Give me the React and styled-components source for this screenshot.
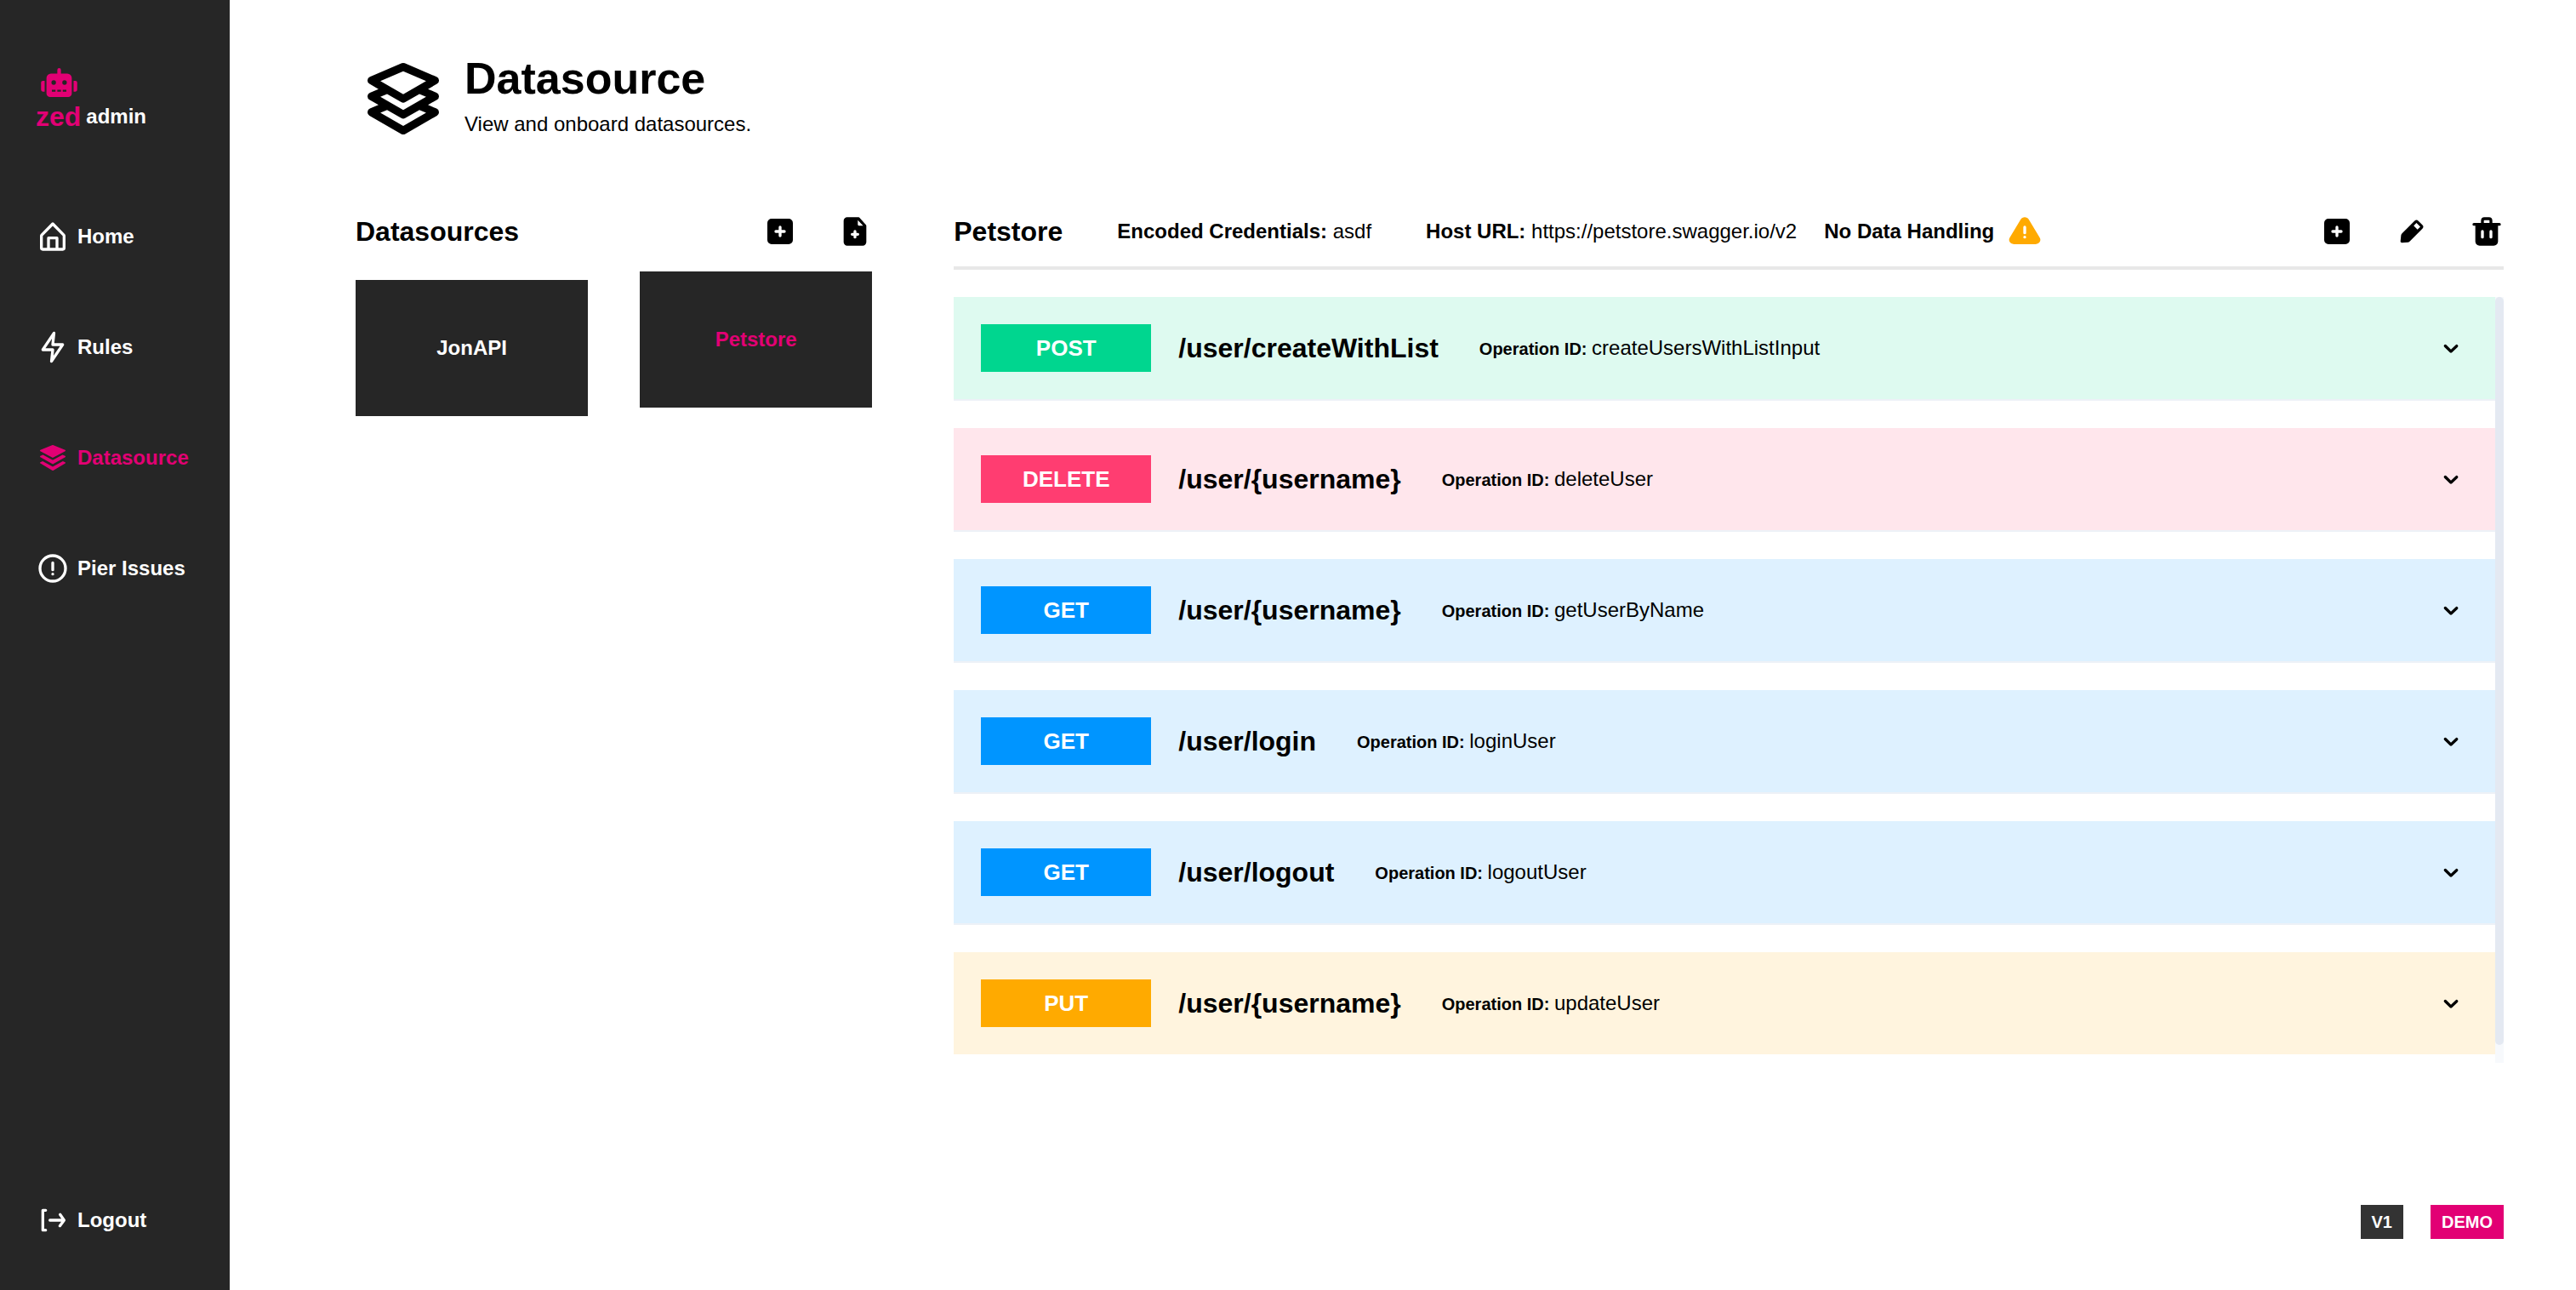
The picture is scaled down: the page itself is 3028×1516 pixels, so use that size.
import React from 'react';
import styled, { createGlobalStyle } from 'styled-components';
import { FaRobot } from 'react-icons/fa';

const color = {
  ink: '#000000',
  panel: '#262626',
  brand: '#e20074',
  white: '#ffffff',
};

const methodColors = {
  POST: { solid: '#00d68f', tint: '#defaf0' },
  DELETE: { solid: '#ff3d71', tint: '#ffe6ec' },
  GET: { solid: '#0095ff', tint: '#def1ff' },
  PUT: { solid: '#ffaa00', tint: '#fff4de' },
};

const iconPaths = {
  home: 'M20.42 10.18L12.71 2.3a1 1 0 0 0-1.42 0l-7.71 7.89A2 2 0 0 0 3 11.62V20a2 2 0 0 0 1.89 2h14.22A2 2 0 0 0 21 20v-8.38a2.07 2.07 0 0 0-.58-1.44zM10 20v-6h4v6zm9 0h-3v-7a1 1 0 0 0-1-1H9a1 1 0 0 0-1 1v7H5v-8.42l7-7.15 7 7.19z',
  flash: 'M11.11 23a1 1 0 0 1-.34-.06 1 1 0 0 1-.65-1.05l.77-7.09H5a1 1 0 0 1-.83-1.56l7.89-11.8a1 1 0 0 1 1.17-.38 1 1 0 0 1 .65 1l-.77 7.14H19a1 1 0 0 1 .83 1.56l-7.89 11.8a1 1 0 0 1-.83.44zM6.87 12.8H12a1 1 0 0 1 .74.33 1 1 0 0 1 .25.78l-.45 4.15 4.59-6.86H12a1 1 0 0 1-1-1.11l.45-4.15z',
  layers: 'M3.24 7.29l8.52 4.63a.51.51 0 0 0 .48 0l8.52-4.63a.44.44 0 0 0-.05-.81L12.19 3a.5.5 0 0 0-.38 0L3.29 6.48a.44.44 0 0 0-.05.81zM20.71 10.66l-1.83-.78-6.64 3.61a.51.51 0 0 1-.48 0L5.12 9.88l-1.83.78a.48.48 0 0 0 0 .85l8.52 4.9a.46.46 0 0 0 .48 0l8.52-4.9a.48.48 0 0 0-.1-.85zM20.71 15.1l-1.56-.68-6.91 3.76a.51.51 0 0 1-.48 0l-6.91-3.76-1.56.68a.49.49 0 0 0 0 .87l8.52 5a.51.51 0 0 0 .48 0l8.52-5a.49.49 0 0 0-.1-.87z',
  layersOutline: 'M21 11.35a1 1 0 0 0-.61-.86l-2.15-.92 2.26-1.3a1 1 0 0 0 .5-.92 1 1 0 0 0-.61-.86l-8-3.41a1 1 0 0 0-.78 0l-8 3.41a1 1 0 0 0-.61.86 1 1 0 0 0 .5.92l2.26 1.3-2.15.92a1 1 0 0 0-.61.86 1 1 0 0 0 .5.92l2.26 1.3-2.15.92a1 1 0 0 0-.61.86 1 1 0 0 0 .5.92l8 4.6a1 1 0 0 0 1 0l8-4.6a1 1 0 0 0 .5-.92 1 1 0 0 0-.61-.86l-2.15-.92 2.26-1.3a1 1 0 0 0 .5-.92zm-9-6.26l5.76 2.45L12 10.85 6.24 7.54zm-.5 7.78a1 1 0 0 0 1 0l3.57-2.05 1.69.72L12 14.85l-5.76-3.31 1.69-.72zm6.26 2.67L12 18.85l-5.76-3.31 1.69-.72 3.57 2.05a1 1 0 0 0 1 0l3.57-2.05z',
  alertCircle: 'M12 2a10 10 0 1 0 10 10A10 10 0 0 0 12 2zm0 18a8 8 0 1 1 8-8 8 8 0 0 1-8 8zM12 15a1 1 0 1 0 0 2 1 1 0 0 0 0-2zM12 7a1 1 0 0 0-1 1v5a1 1 0 0 0 2 0V8a1 1 0 0 0-1-1z',
  logOut: 'M7 6a1 1 0 0 0 0-2H5a1 1 0 0 0-1 1v14a1 1 0 0 0 1 1h2a1 1 0 0 0 0-2H6V6zM20.82 11.42l-2.82-4a1 1 0 0 0-1.39-.24 1 1 0 0 0-.24 1.4L18.09 11H10a1 1 0 0 0 0 2h8l-1.8 2.4a1 1 0 0 0 .2 1.4 1 1 0 0 0 .6.2 1 1 0 0 0 .8-.4l3-4a1 1 0 0 0 .02-1.18z',
  plusSquare: 'M18 3H6a3 3 0 0 0-3 3v12a3 3 0 0 0 3 3h12a3 3 0 0 0 3-3V6a3 3 0 0 0-3-3zm-3 10h-2v2a1 1 0 0 1-2 0v-2H9a1 1 0 0 1 0-2h2V9a1 1 0 0 1 2 0v2h2a1 1 0 0 1 0 2z',
  fileAdd: 'M19.74 7.33l-4.44-5a1 1 0 0 0-.74-.33h-8A2.53 2.53 0 0 0 4 4.5v15A2.53 2.53 0 0 0 6.56 22h10.88A2.53 2.53 0 0 0 20 19.5V8a1 1 0 0 0-.26-.67zM14 15h-1v1a1 1 0 0 1-2 0v-1h-1a1 1 0 0 1 0-2h1v-1a1 1 0 0 1 2 0v1h1a1 1 0 0 1 0 2zm.71-7a.79.79 0 0 1-.71-.85V4l3.74 4z',
  edit: 'M19.4 7.34L16.66 4.6A2 2 0 0 0 14 4.53l-9 9a2 2 0 0 0-.57 1.21L4 18.91a1 1 0 0 0 .29.8A1 1 0 0 0 5 20h.09l4.17-.38a2 2 0 0 0 1.21-.57l9-9a1.92 1.92 0 0 0-.07-2.71zM16 10.68L13.32 8l1.95-2L18 8.73z',
  trash: 'M21 6h-5V4.33A2.42 2.42 0 0 0 13.5 2h-3A2.42 2.42 0 0 0 8 4.33V6H3a1 1 0 0 0 0 2h1v11a3 3 0 0 0 3 3h10a3 3 0 0 0 3-3V8h1a1 1 0 0 0 0-2zM10 16a1 1 0 0 1-2 0v-4a1 1 0 0 1 2 0zm0-11.67c0-.16.21-.33.5-.33h3c.29 0 .5.17.5.33V6h-4zM16 16a1 1 0 0 1-2 0v-4a1 1 0 0 1 2 0z',
  alertTriangle: 'M22.56 16.3L14.89 3.58a3.43 3.43 0 0 0-5.78 0L1.44 16.3a3 3 0 0 0-.05 3A3.37 3.37 0 0 0 4.33 21h15.34a3.37 3.37 0 0 0 2.94-1.66 3 3 0 0 0-.05-3.04zM12 17a1 1 0 1 1 1-1 1 1 0 0 1-1 1zm1-4a1 1 0 0 1-2 0V9a1 1 0 0 1 2 0z',
  chevronDown: 'M12 15.5a1 1 0 0 1-.71-.29l-4-4a1 1 0 1 1 1.42-1.42L12 13.1l3.3-3.18a1 1 0 1 1 1.38 1.44l-4 3.86a1 1 0 0 1-.68.28z',
};

const GlobalStyle = createGlobalStyle`
  * {
    box-sizing: border-box;
  }

  body {
    margin: 0;
    background: ${color.white};
    color: ${color.ink};
    font-family: "Liberation Sans", Helvetica, Arial, sans-serif;
    font-size: 24px;
    line-height: 28px;
  }

  h1, h2, p, ul {
    margin: 0;
    padding: 0;
  }

  ul {
    list-style: none;
  }

  button {
    padding: 0;
    border: 0;
    background: none;
    color: inherit;
    font: inherit;
    cursor: pointer;
  }
`;

const Page = styled.div`
  display: flex;
  min-height: 100vh;
`;

const Sidebar = styled.aside`
  display: flex;
  flex: 0 0 270px;
  flex-direction: column;
  padding: 80px 24px 62px 42px;
  background: ${color.panel};
  color: ${color.white};
  font-weight: 700;
`;

const Brand = styled.div`
  margin-bottom: 101px;
`;

const RobotIcon = styled(FaRobot)`
  display: block;
  width: 43px;
  height: 34px;
  margin-left: 6px;
  color: ${color.brand};
`;

const BrandName = styled.div`
  display: flex;
  align-items: center;
  gap: 6px;
  height: 40px;
  margin-top: 3px;
`;

const BrandMark = styled.span`
  color: ${color.brand};
  font-size: 32px;
`;

const NavList = styled.ul`
  display: flex;
  flex-direction: column;
  gap: 90px;
`;

const NavLink = styled.a`
  display: flex;
  align-items: center;
  gap: 9px;
  color: ${({ $active }) => ($active ? color.brand : color.white)};
  text-decoration: none;
`;

const LogoutArea = styled.div`
  margin-top: auto;
`;

const Glyph = styled.svg`
  display: block;
  flex: none;
  width: ${({ $size }) => $size}px;
  height: ${({ $size }) => $size}px;
  fill: ${({ $fill }) => $fill};
`;

const Main = styled.main`
  display: flex;
  flex: 1;
  flex-direction: column;
  min-width: 0;
  padding: 60px 85px 60px 148px;
`;

const PageHeader = styled.header`
  display: flex;
  gap: 16px;
  margin-bottom: 80px;
`;

const PageHeading = styled.div`
  display: flex;
  flex-direction: column;
  gap: 10px;
  padding-top: 2px;
`;

const PageTitle = styled.h1`
  font-size: 52px;
  line-height: 60px;
`;

const Columns = styled.div`
  display: grid;
  grid-template-columns: minmax(0, 1fr) minmax(0, 3fr);
  gap: 96px;
`;

const SectionBar = styled.div`
  display: flex;
  align-items: center;
  justify-content: space-between;
`;

const DetailBar = styled(SectionBar)`
  padding-bottom: 21px;
  border-bottom: 4px solid #e8e8e8;
`;

const SectionTitle = styled.h2`
  font-size: 32px;
  line-height: 40px;
`;

const Actions = styled.div`
  display: flex;
  gap: 48px;
`;

const CardGrid = styled.div`
  display: grid;
  grid-template-columns: 1fr 1fr;
  gap: 61px;
  margin-top: 37px;
`;

const DatasourceCard = styled.button`
  height: 160px;
  background: ${color.panel};
  color: ${({ $selected }) => ($selected ? color.brand : color.white)};
  font-weight: 700;
  transform: ${({ $selected }) => ($selected ? 'translateY(-10px)' : 'none')};
`;

const Facts = styled.div`
  display: flex;
  align-items: center;
  gap: 64px;
`;

const HostFacts = styled.div`
  display: flex;
  align-items: center;
  gap: 32px;
`;

const Warning = styled.strong`
  display: flex;
  align-items: center;
  gap: 16px;
`;

const ScrollArea = styled.div`
  display: flex;
  max-height: 900px;
  margin-top: 32px;
`;

const OperationList = styled.ul`
  display: flex;
  flex: 1;
  flex-direction: column;
  gap: 32px;
  min-width: 0;
  overflow-y: auto;
  scrollbar-width: none;

  &::after {
    flex: none;
    content: "";
  }
`;

const ScrollTrack = styled.div`
  flex: 0 0 10px;
  background: #f7f9fc;
`;

const ScrollThumb = styled.div`
  border-radius: 5px;
  background: #e4e9f2;
`;

const Operation = styled.li`
  display: flex;
  flex: none;
  align-items: center;
  padding: 32px;
  border-bottom: 2px solid #edf1f7;
  background: ${({ $method }) => methodColors[$method].tint};

  &:last-child {
    border-bottom: 0;
  }
`;

const Method = styled.span`
  width: 200px;
  margin-right: 32px;
  background: ${({ $method }) => methodColors[$method].solid};
  color: ${color.white};
  font-size: 26px;
  font-weight: 700;
  line-height: 56px;
  text-align: center;
`;

const Path = styled.strong`
  margin-right: 48px;
  font-size: 32px;
  line-height: 40px;
`;

const OperationId = styled.p`
  flex: 1;
`;

const OperationLabel = styled.strong`
  font-size: 20px;
`;

const Footer = styled.footer`
  display: flex;
  justify-content: flex-end;
  gap: 32px;
  margin-top: auto;
`;

const Tag = styled.span`
  padding: 0 13px;
  background: ${({ $accent }) => ($accent ? color.brand : '#333333')};
  color: ${color.white};
  font-size: 20px;
  font-weight: 700;
  line-height: 40px;
`;

const navItems = [
  { label: 'Home', icon: 'home' },
  { label: 'Rules', icon: 'flash' },
  { label: 'Datasource', icon: 'layers', active: true },
  { label: 'Pier Issues', icon: 'alertCircle' },
];

const datasources = ['JonAPI', 'Petstore'];

const operations = [
  { method: 'POST', path: '/user/createWithList', id: 'createUsersWithListInput' },
  { method: 'DELETE', path: '/user/{username}', id: 'deleteUser' },
  { method: 'GET', path: '/user/{username}', id: 'getUserByName' },
  { method: 'GET', path: '/user/login', id: 'loginUser' },
  { method: 'GET', path: '/user/logout', id: 'logoutUser' },
  { method: 'PUT', path: '/user/{username}', id: 'updateUser' },
];

function Icon({ name, size = 40, fill = 'currentColor' }) {
  return (
    <Glyph viewBox="0 0 24 24" aria-hidden="true" $size={size} $fill={fill}>
      <path d={iconPaths[name]} />
    </Glyph>
  );
}

function IconButton({ icon, label }) {
  return (
    <button type="button" aria-label={label}>
      <Icon name={icon} />
    </button>
  );
}

function ScrollingOperations({ children }) {
  const listRef = React.useRef(null);
  const [thumb, setThumb] = React.useState({ height: 0, marginTop: 0 });

  const measure = React.useCallback(() => {
    const { clientHeight, scrollHeight, scrollTop } = listRef.current;
    const ratio = clientHeight / scrollHeight;
    setThumb({
      height: ratio < 1 ? Math.round(clientHeight * ratio) : 0,
      marginTop: Math.round(scrollTop * ratio),
    });
  }, []);

  React.useLayoutEffect(() => {
    measure();
    window.addEventListener('resize', measure);
    return () => window.removeEventListener('resize', measure);
  }, [measure]);

  return (
    <ScrollArea>
      <OperationList ref={listRef} onScroll={measure}>
        {children}
      </OperationList>
      <ScrollTrack aria-hidden="true">
        {/* A flow root is not needed: the thumb never leaves the track. */}
        <ScrollThumb style={{ height: thumb.height, transform: `translateY(${thumb.marginTop}px)` }} />
      </ScrollTrack>
    </ScrollArea>
  );
}

export default function App() {
  const [selected, setSelected] = React.useState('Petstore');

  return (
    <>
      <GlobalStyle />
      <Page>
        <Sidebar>
          <Brand>
            <RobotIcon aria-hidden="true" />
            <BrandName>
              <BrandMark>zed</BrandMark>
              <span>admin</span>
            </BrandName>
          </Brand>
          <nav>
            <NavList>
              {navItems.map(({ label, icon, active }) => (
                <li key={label}>
                  <NavLink href="#" $active={active}>
                    <Icon name={icon} />
                    {label}
                  </NavLink>
                </li>
              ))}
            </NavList>
          </nav>
          <LogoutArea>
            <NavLink href="#">
              <Icon name="logOut" />
              Logout
            </NavLink>
          </LogoutArea>
        </Sidebar>

        <Main>
          <PageHeader>
            <Icon name="layersOutline" size={112} />
            <PageHeading>
              <PageTitle>Datasource</PageTitle>
              <p>View and onboard datasources.</p>
            </PageHeading>
          </PageHeader>

          <Columns>
            <section>
              <SectionBar>
                <SectionTitle>Datasources</SectionTitle>
                <Actions>
                  <IconButton icon="plusSquare" label="Add datasource" />
                  <IconButton icon="fileAdd" label="Import datasource" />
                </Actions>
              </SectionBar>
              <CardGrid>
                {datasources.map((name) => (
                  <DatasourceCard
                    key={name}
                    type="button"
                    $selected={name === selected}
                    onClick={() => setSelected(name)}
                  >
                    {name}
                  </DatasourceCard>
                ))}
              </CardGrid>
            </section>

            <section>
              <DetailBar>
                <Facts>
                  <SectionTitle>Petstore</SectionTitle>
                  <p>
                    <strong>Encoded Credentials:</strong> asdf
                  </p>
                  <HostFacts>
                    <p>
                      <strong>Host URL:</strong> https://petstore.swagger.io/v2
                    </p>
                    <Warning>
                      No Data Handling
                      <Icon name="alertTriangle" fill="#ffaa00" />
                    </Warning>
                  </HostFacts>
                </Facts>
                <Actions>
                  <IconButton icon="plusSquare" label="Add operation" />
                  <IconButton icon="edit" label="Edit datasource" />
                  <IconButton icon="trash" label="Delete datasource" />
                </Actions>
              </DetailBar>
              <ScrollingOperations>
                {operations.map(({ method, path, id }) => (
                  <Operation key={id} $method={method}>
                    <Method $method={method}>{method}</Method>
                    <Path>{path}</Path>
                    <OperationId>
                      <OperationLabel>Operation ID: </OperationLabel>
                      {id}
                    </OperationId>
                    <IconButton icon="chevronDown" label={`Expand ${id}`} />
                  </Operation>
                ))}
              </ScrollingOperations>
            </section>
          </Columns>

          <Footer>
            <Tag>V1</Tag>
            <Tag $accent>DEMO</Tag>
          </Footer>
        </Main>
      </Page>
    </>
  );
}
